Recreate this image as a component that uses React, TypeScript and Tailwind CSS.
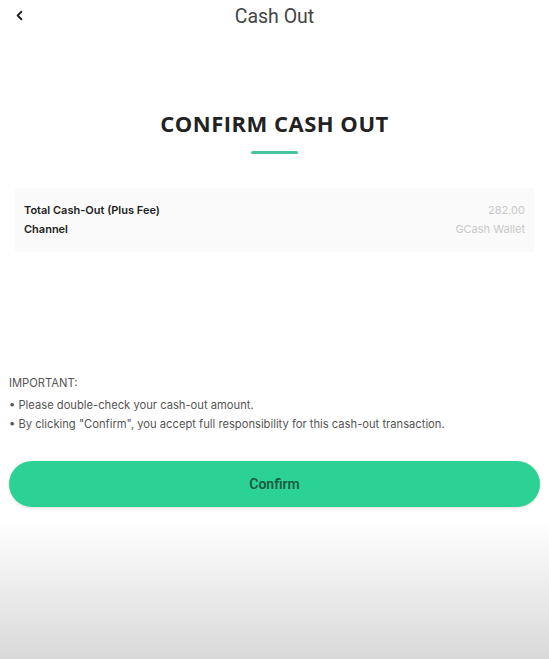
import { ChevronLeft } from 'lucide-react';

const notes = [
  'Please double-check your cash-out amount.',
  'By clicking "Confirm", you accept full responsibility for this cash-out transaction.',
];

export default function App() {
  return (
    <div className="w-[549px] h-[659px] flex flex-col bg-gradient-to-b from-white from-[79%] to-[#d9d9d9] font-['Roboto',sans-serif] overflow-hidden">
      {/* header */}
      <div className="relative h-[33px] flex items-center justify-center">
        <button className="absolute left-[12px] top-[8px] text-[#222]">
          <ChevronLeft size={15} strokeWidth={3} />
        </button>
        <h1 className="text-[19.5px] text-[#444] leading-none">Cash Out</h1>
      </div>

      <div className="pt-[79px] flex flex-col items-center">
        <h2 className="font-['Open_Sans',sans-serif] font-bold text-[22px] leading-none tracking-[0.5px] text-[#222]">
          CONFIRM CASH OUT
        </h2>
        <div className="mt-[17px] w-[47px] h-[3px] bg-[#48c39f] rounded-full" />
      </div>

      <div className="mt-[34px] mx-[15px] bg-[#fafafa] px-[9px] pt-[13px] pb-[13px] text-[11px] font-['Inter',sans-serif]">
        <div className="flex justify-between h-[19px] items-center">
          <span className="font-semibold text-[#222]">Total Cash-Out (Plus Fee)</span>
          <span className="text-[#c9c9c9]">282.00</span>
        </div>
        <div className="flex justify-between h-[19px] items-center">
          <span className="font-semibold text-[#222]">Channel</span>
          <span className="text-[#c9c9c9]">GCash Wallet</span>
        </div>
      </div>

      <div className="mt-[122px] px-[9px] text-[11.2px] text-[#555] font-['Inter',sans-serif]">
        <p className="leading-[19px]">IMPORTANT:</p>
        <ul className="mt-[3px]">
          {notes.map((n) => (
            <li key={n} className="leading-[19px]">• {n}</li>
          ))}
        </ul>
      </div>

      <div className="mt-[27px] px-[9px]">
        <button className="w-full h-[46px] rounded-full bg-[#2bd293] text-[#175c3f] text-[14px] font-semibold shadow-[0_1px_3px_rgba(0,0,0,0.15)]">
          Confirm
        </button>
      </div>
    </div>
  );
}
